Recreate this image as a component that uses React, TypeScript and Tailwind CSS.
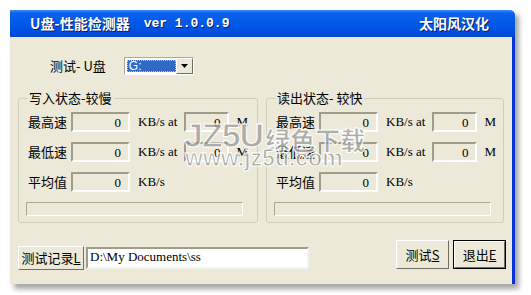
import React from "react";

const cjk = "font-['SimSun','Noto_Sans_CJK_SC',sans-serif]";
const serif = "font-['Liberation_Serif',serif]";

const Sunken = ({ w, value }: { w: string; value: string }) => (
  <div
    className={`${w} h-[20px] border-2 border-t-[#a09c8c] border-l-[#a09c8c] border-b-white border-r-white bg-[#ece9d8] flex items-center justify-end pr-[7px] ${serif} text-[13px] text-black leading-none`}
  >
    {value}
  </div>
);

const SpeedRow = ({ label, at }: { label: string; at: boolean }) => (
  <div className="flex items-center h-[20px]">
    <span className={`w-[43px] text-[13px] ${cjk}`}>{label}</span>
    <Sunken w="w-[59px]" value="0" />
    <span className={`ml-[8px] ${serif} text-[13px]`}>
      KB/s{at ? " at" : ""}
    </span>
    {at && (
      <>
        <div className="ml-[7px]">
          <Sunken w="w-[45px]" value="0" />
        </div>
        <span className={`ml-[7px] ${serif} text-[13px]`}>M</span>
      </>
    )}
  </div>
);

const Group = ({ title, w }: { title: string; w: string }) => (
  <div className={`relative ${w} h-[125px] border border-[#d0d0bf] rounded-[3px] pl-[9px] pt-[13px]`}>
    <span className={`absolute left-[8px] -top-[9px] px-[2px] bg-[#ece9d8] text-[13px] leading-[16px] ${cjk}`}>
      {title}
    </span>
    <div className="flex flex-col gap-[10px]">
      <SpeedRow label="最高速" at />
      <SpeedRow label="最低速" at />
      <SpeedRow label="平均值" at={false} />
    </div>
    <div className="mt-[10px] -ml-[2px] w-[217px] h-[14px] border border-t-[#aca899] border-l-[#aca899] border-b-white border-r-white" />
  </div>
);

const XpButton = ({ children, w, h, def }: { children: React.ReactNode; w: string; h: string; def?: boolean }) => (
  <div className={`${w} ${h} ${def ? "border border-black" : ""}`}>
    <div className="w-full h-full border border-t-white border-l-white border-b-[#716f64] border-r-[#716f64] bg-[#ece9d8] flex items-center justify-center text-[13px]">
      <span className={cjk}>{children}</span>
    </div>
  </div>
);

export default function App() {
  return (
    <div className="w-[531px] h-[295px] bg-white pl-[10px] pt-[10px] text-black">
      <div className="relative w-[505px] shadow-[4px_5px_5px_rgba(0,0,0,0.35)]">
        <div className="h-[27px] flex items-center pl-[20px] pr-[26px] bg-[linear-gradient(to_bottom,#3d8cf6_0%,#0a61ee_12%,#0058e8_55%,#0049d4_100%)] rounded-tr-[5px] text-white font-bold text-[14px] [text-shadow:1px_1px_0_#0a1e60]">
          <span className={cjk}>U盘-性能检测器</span>
          <span className="ml-[14px] font-['Liberation_Mono',monospace] text-[13px]">ver 1.0.0.9</span>
          <span className={`ml-auto ${cjk}`}>太阳风汉化</span>
        </div>
        <div className="h-[247px] bg-[#ece9d8] border-r-[3px] border-[#0831d9] pt-[20px]">
          <div className="flex items-center h-[18px]">
            <span className={`ml-[40px] text-[13px] ${cjk}`}>测试- U盘</span>
            <div className="ml-[18px] w-[70px] h-[18px] border border-t-[#aca899] border-l-[#aca899] border-b-white border-r-white flex bg-white">
              <div className="flex-1 m-[2px] mr-0 bg-[#316ac5] outline-1 outline-dotted outline-[#e8c060] -outline-offset-1 text-white text-[12px] leading-[12px] pl-[2px] font-['Liberation_Sans',sans-serif]">
                G:
              </div>
              <div className="w-[17px] h-full border border-t-white border-l-white border-b-[#716f64] border-r-[#716f64] bg-[#ece9d8] flex items-center justify-center">
                <svg width="7" height="4" viewBox="0 0 7 4">
                  <path d="M0 0h7L3.5 4z" fill="#000" />
                </svg>
              </div>
            </div>
          </div>
          <div className="flex gap-[8px] ml-[8px] mt-[23px]">
            <Group title="写入状态-较慢" w="w-[240px]" />
            <Group title="读出状态- 较快" w="w-[238px]" />
          </div>
          <div className="flex items-start mt-[17px] ml-[8px] mr-[6px]">
            <div className="mt-[6px]">
              <XpButton w="w-[66px]" h="h-[24px]">
                测试记录<u>L</u>
              </XpButton>
            </div>
            <div className={`mt-[7px] ml-[2px] w-[223px] h-[22px] bg-white border-2 border-t-[#a09c8c] border-l-[#a09c8c] border-b-[#f4f3ee] border-r-[#f4f3ee] pl-[2px] ${serif} text-[13px] leading-[16px]`}>
              D:\My Documents\ss
            </div>
            <div className="ml-auto flex gap-[4px]">
              <XpButton w="w-[53px]" h="h-[29px]">
                测试<u>S</u>
              </XpButton>
              <XpButton w="w-[53px]" h="h-[29px]" def>
                退出<u>E</u>
              </XpButton>
            </div>
          </div>
        </div>
        <div className="absolute left-[174px] top-[108px] pointer-events-none font-black text-[#999999]/75 [-webkit-text-stroke:1px_#ffffff] leading-none">
          <div className="flex items-end">
            <span className="text-[34px] font-['Liberation_Sans',sans-serif] tracking-[-1px]">JZ5U</span>
            <span className={`text-[25px] ml-[2px] ${cjk}`}>绿色下载</span>
          </div>
          <div className="text-[23px] -mt-[5px] ml-[1px] font-['Liberation_Sans',sans-serif]">www.jz5u.com</div>
        </div>
      </div>
    </div>
  );
}
